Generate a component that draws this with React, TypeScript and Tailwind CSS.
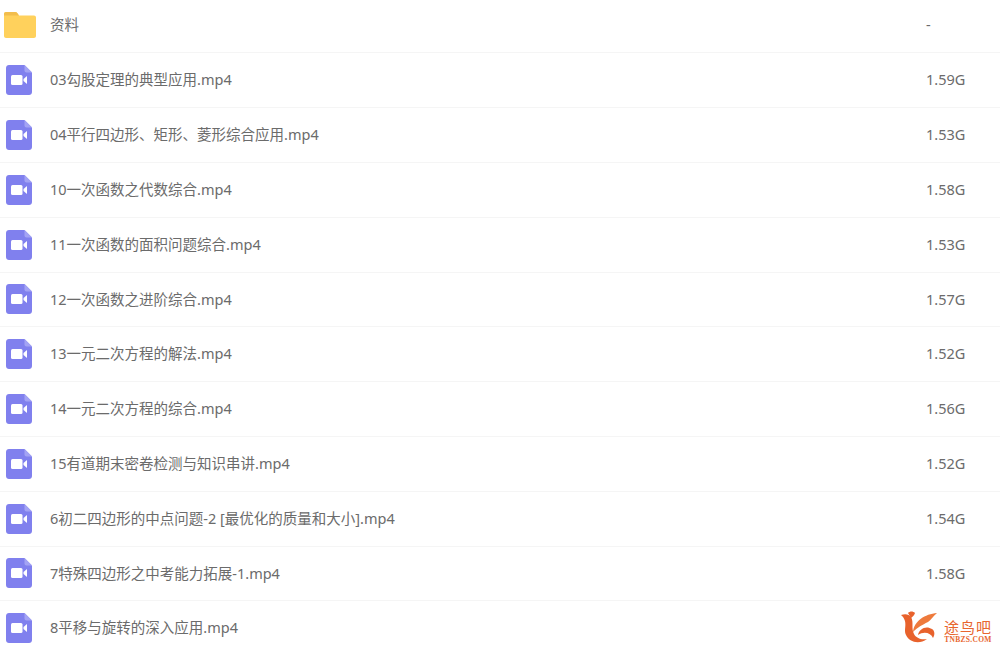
import React from 'react';

const files = [
  { name: '03勾股定理的典型应用.mp4', size: '1.59G' },
  { name: '04平行四边形、矩形、菱形综合应用.mp4', size: '1.53G' },
  { name: '10一次函数之代数综合.mp4', size: '1.58G' },
  { name: '11一次函数的面积问题综合.mp4', size: '1.53G' },
  { name: '12一次函数之进阶综合.mp4', size: '1.57G' },
  { name: '13一元二次方程的解法.mp4', size: '1.52G' },
  { name: '14一元二次方程的综合.mp4', size: '1.56G' },
  { name: '15有道期末密卷检测与知识串讲.mp4', size: '1.52G' },
  { name: '6初二四边形的中点问题-2 [最优化的质量和大小].mp4', size: '1.54G' },
  { name: '7特殊四边形之中考能力拓展-1.mp4', size: '1.58G' },
  { name: '8平移与旋转的深入应用.mp4', size: '' },
];

function FolderIcon() {
  return (
    <svg width="32" height="26" viewBox="0 0 32 26" className="ml-[4px]">
      <path d="M2 0h9c1 0 1.800.4 2.400 1.200L15 3.400h15c1.100 0 2 .9 2 2V24c0 1.100-.9 2-2 2H2c-1.100 0-2-.9-2-2V2C0 .9.900 0 2 0z" fill="#ffd15c" />
      <path d="M0 3.400h15L13.400 1.200C12.800.4 12 0 11 0H2C.9 0 0 .9 0 2z" fill="#f2bd4c" />
    </svg>
  );
}

function VideoIcon() {
  return (
    <svg width="26" height="30" viewBox="0 0 26 30" className="ml-[6px]">
      <path d="M3 0h15.500L26 7.500V27c0 1.700-1.300 3-3 3H3c-1.700 0-3-1.300-3-3V3c0-1.700 1.300-3 3-3z" fill="#8080ee" />
      <path d="M18.500 0L26 7.500h-5.500c-1.100 0-2-.9-2-2z" fill="#a3a3f4" />
      <rect x="5" y="10" width="11.500" height="10" rx="1.500" fill="#fff" />
      <path d="M17.500 14l3.500-3v8l-3.500-3z" fill="#fff" />
    </svg>
  );
}

function Row({ name, size, folder, first }: { name: string; size: string; folder?: boolean; first?: boolean }) {
  return (
    <div className={`flex items-center border-b border-[#f5f5f5] ${first ? 'h-[53.4px] pb-[3.4px]' : 'h-[54.8px]'}`}>
      <div className="w-[50px] shrink-0">{folder ? <FolderIcon /> : <VideoIcon />}</div>
      <div className="flex-1 truncate">{name}</div>
      <div className="w-[74px] shrink-0">{size}</div>
    </div>
  );
}

export default function App() {
  return (
    <div className="relative h-[647px] w-[1000px] overflow-hidden bg-white text-[14.5px] text-[#6b6b6b] antialiased font-['Noto_Sans','Noto_Sans_CJK_SC',sans-serif]">
      <Row name="资料" size="-" folder first />
      {files.map((f) => (
        <Row key={f.name} name={f.name} size={f.size} />
      ))}
      {/* watermark */}
      <div className="absolute left-[900px] top-[611px] flex items-end gap-[1px]">
        <svg width="42" height="34" viewBox="0 0 42 34">
          <path d="M1 4c4-1.500 8-1 10 2 3 5 0 11 3 17 2 4 7 6 13 5-8 6-18 3-21-4C3 18 9 11 1 4z" fill="#e8622c" />
          <path d="M13 21C14 10 25 3 37 2c-4 3-6 7-9 9-6 3-10 5-15 10z" fill="#ee7a3c" />
          <path d="M18 24c1-6 8-10 14-6 3 2 3 6 1 9-2-5-9-7-15-3z" fill="#e8622c" />
          <path d="M8 2c2-2 5-2 7 0-1 3-3 4-4 5z" fill="#e8622c" />
        </svg>
        <div className="mb-[2px] flex w-[50px] flex-col items-center whitespace-nowrap text-[#e8662f]">
          <span className="h-[17px] text-[15px] leading-[17px] tracking-[1px] font-['Noto_Sans_CJK_SC',sans-serif]">途鸟吧</span>
          <span className="mt-[1px] h-[7px] text-[7.5px] leading-[7px] font-bold tracking-[0.3px] font-['Liberation_Serif',serif]">TNBZS.COM</span>
        </div>
      </div>
    </div>
  );
}
